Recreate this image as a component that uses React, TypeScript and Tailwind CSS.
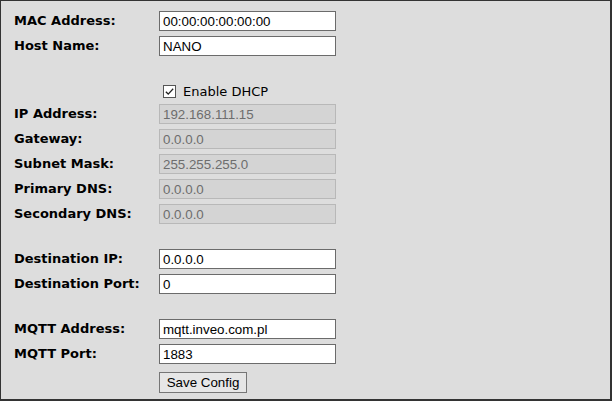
const network = [
  { label: 'IP Address:', value: '192.168.111.15' },
  { label: 'Gateway:', value: '0.0.0.0' },
  { label: 'Subnet Mask:', value: '255.255.255.0' },
  { label: 'Primary DNS:', value: '0.0.0.0' },
  { label: 'Secondary DNS:', value: '0.0.0.0' },
]

function Field({ label, value, disabled }: { label?: string; value?: string; disabled?: boolean }) {
  return (
    <div className="flex h-[20px] items-center">
      <label className="w-[145px] shrink-0 font-['DejaVu_Sans',sans-serif] text-[13px] font-bold text-black">
        {label}
      </label>
      <input
        type="text"
        readOnly
        disabled={disabled}
        value={value}
        className={
          disabled
            ? "h-[20px] w-[177px] border border-[#b8b8b8] bg-[#d4d4d4] px-[3px] font-['Liberation_Sans',Arial,sans-serif] text-[13.33px] text-[#6d6d6d] outline-none"
            : "h-[20px] w-[177px] border border-[#6b6b6b] bg-white px-[3px] font-['Liberation_Sans',Arial,sans-serif] text-[13.33px] text-black outline-none"
        }
      />
    </div>
  )
}

export default function App() {
  return (
    <div className="h-[401px] w-[612px] border-l border-t border-r-2 border-b-2 border-[#333333] bg-[#dddddd] pl-[13px] pt-[10px]">
      <div className="flex flex-col gap-[5px]">
        <Field label="MAC Address:" value="00:00:00:00:00:00" />
        <Field label="Host Name:" value="NANO" />
        <div className="h-[15px]" />

        {/* DHCP toggle */}
        <div className="flex h-[18px] items-center pl-[149px]">
          <span className="mt-[2px] flex h-[13px] w-[13px] items-center justify-center border border-[#555555] bg-white">
            <svg viewBox="0 0 12 12" className="h-[11px] w-[11px]" fill="none" stroke="#222" strokeWidth={1.4}>
              <path d="M2 6.2l2.6 2.6L10 3" />
            </svg>
          </span>
          <span className="ml-[7px] mt-[4px] font-['DejaVu_Sans',sans-serif] text-[13px] text-black">Enable DHCP</span>
        </div>

        {network.map((f) => (
          <Field key={f.label} label={f.label} value={f.value} disabled />
        ))}
        <div className="h-[15px]" />

        <Field label="Destination IP:" value="0.0.0.0" />
        <Field label="Destination Port:" value="0" />
        <div className="h-[15px]" />

        <Field label="MQTT Address:" value="mqtt.inveo.com.pl" />
        <Field label="MQTT Port:" value="1883" />

        <div className="pl-[145px]">
          <button className="h-[21px] w-[88px] border border-[#767676] bg-[#e6e6e6] font-['Liberation_Sans',Arial,sans-serif] text-[13.33px] text-black">
            Save Config
          </button>
        </div>
      </div>
    </div>
  )
}
